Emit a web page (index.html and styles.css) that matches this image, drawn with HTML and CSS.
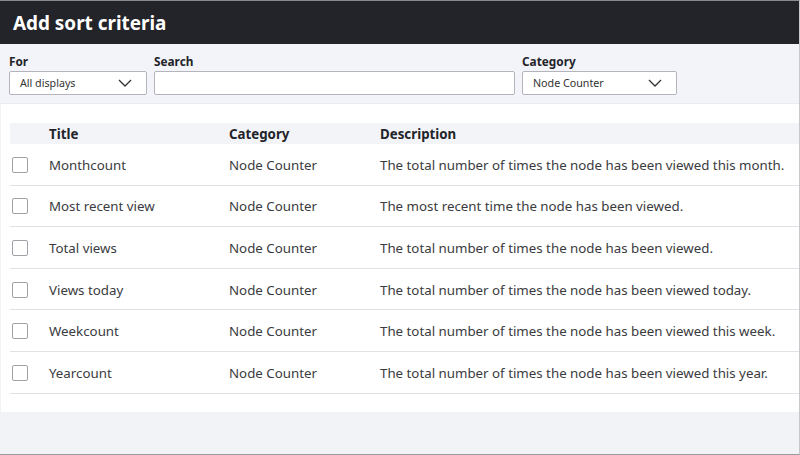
FILE: index.html
```html
<!DOCTYPE html>
<html lang="en">
<head>
  <meta charset="UTF-8">
  <title>Add sort criteria</title>
  <link rel="stylesheet" href="styles.css">
</head>
<body>
  <div class="dialog">
    <header class="dialog-title">Add sort criteria</header>
    <div class="filters">
      <div class="field">
        <label>For</label>
        <div class="select select-for">
          <span>All displays</span>
          <svg width="14" height="8" viewBox="0 0 14 8"><path d="M1 1l6 6 6-6" fill="none" stroke="#333" stroke-width="1.3"/></svg>
        </div>
      </div>
      <div class="field">
        <label>Search</label>
        <input type="text" class="search">
      </div>
      <div class="field">
        <label>Category</label>
        <div class="select select-cat">
          <span>Node Counter</span>
          <svg width="14" height="8" viewBox="0 0 14 8"><path d="M1 1l6 6 6-6" fill="none" stroke="#333" stroke-width="1.3"/></svg>
        </div>
      </div>
    </div>
    <div class="content">
      <div class="table">
        <div class="row head">
          <div></div>
          <div>Title</div>
          <div>Category</div>
          <div>Description</div>
        </div>
        <div class="row">
          <div><span class="check"></span></div>
          <div>Monthcount</div>
          <div>Node Counter</div>
          <div>The total number of times the node has been viewed this month.</div>
        </div>
        <div class="row">
          <div><span class="check"></span></div>
          <div>Most recent view</div>
          <div>Node Counter</div>
          <div>The most recent time the node has been viewed.</div>
        </div>
        <div class="row">
          <div><span class="check"></span></div>
          <div>Total views</div>
          <div>Node Counter</div>
          <div>The total number of times the node has been viewed.</div>
        </div>
        <div class="row">
          <div><span class="check"></span></div>
          <div>Views today</div>
          <div>Node Counter</div>
          <div>The total number of times the node has been viewed today.</div>
        </div>
        <div class="row">
          <div><span class="check"></span></div>
          <div>Weekcount</div>
          <div>Node Counter</div>
          <div>The total number of times the node has been viewed this week.</div>
        </div>
        <div class="row">
          <div><span class="check"></span></div>
          <div>Yearcount</div>
          <div>Node Counter</div>
          <div>The total number of times the node has been viewed this year.</div>
        </div>
      </div>
    </div>
    <div class="footer"></div>
  </div>
</body>
</html>
```

FILE: styles.css
```css
body {
  margin: 0;
  font-family: 'Noto Sans', 'Open Sans', Arial, sans-serif;
  color: #232429;
  background: #f2f3f7;
}
.dialog {
  height: 455px;
  box-sizing: border-box;
  border-top: 1px solid #8a8a8e;
  border-right: 1px solid #c8c8cc;
  border-bottom: 1px solid #9a9aa0;
  display: flex;
  flex-direction: column;
}
.dialog-title {
  height: 43px;
  background: #232429;
  color: #fff;
  font-size: 18.9px;
  font-weight: 700;
  padding-left: 13px;
  display: flex;
  align-items: center;
}
.filters {
  background: #f3f4f9;
  padding: 9px 9px 8px 9px;
  display: flex;
  gap: 7px;
  border-bottom: 1px solid #ebecf0;
}
.field {
  display: flex;
  flex-direction: column;
  gap: 1px;
}
.field label {
  font-size: 11.8px;
  font-weight: 700;
  line-height: 17px;
}
.select, .search {
  box-sizing: border-box;
  height: 24px;
  background: #fff;
  border: 1px solid #b4b4ba;
  border-radius: 2px;
}
.select {
  display: flex;
  align-items: center;
  justify-content: space-between;
  padding: 0 14px 0 10px;
  font-size: 10.7px;
  color: #333;
}
.select-for {
  width: 138px;
}
.search {
  width: 361px;
  margin: 0;
}
.select-cat {
  width: 155px;
}
.content {
  background: #fff;
  padding: 19px 0 18px 9px;
  margin-left: 1px;
}
.row {
  display: grid;
  grid-template-columns: 39px 180px 151px 1fr;
  align-items: center;
  height: 41.6px;
  box-sizing: border-box;
  padding-top: 1px;
  border-bottom: 1px solid #e2e2e6;
  font-size: 13.3px;
  color: #3a3b40;
}
.row.head {
  height: 21px;
  background: #f3f4f8;
  border-bottom: none;
  font-weight: 700;
  color: #232429;
}
.check {
  display: block;
  width: 14px;
  height: 14px;
  margin-left: 2px;
  border: 1px solid #a0a0a6;
  border-radius: 2px;
}
.footer {
  flex: 1;
  background: #f2f3f7;
}
```
